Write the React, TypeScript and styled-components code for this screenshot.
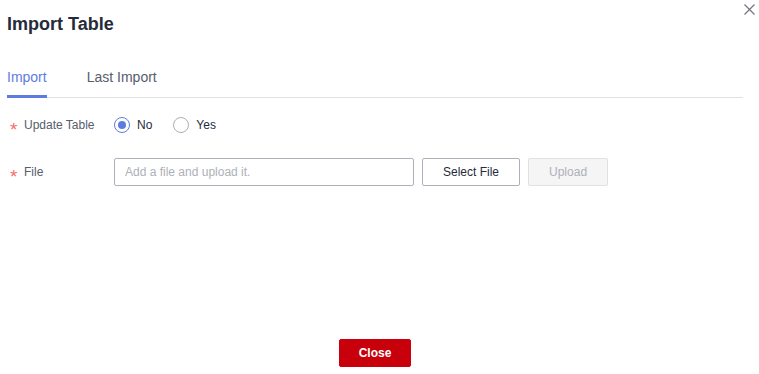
import React, { useState } from 'react';
import styled, { createGlobalStyle } from 'styled-components';

const GlobalStyle = createGlobalStyle`
  html, body {
    margin: 0;
    padding: 0;
    background: #fff;
  }
  body {
    font-family: 'Liberation Sans', Arial, sans-serif;
    color: #252b3a;
  }
`;

const Dialog = styled.div`
  position: relative;
  box-sizing: border-box;
  height: 100vh;
  padding: 12px 16px 7px 7px;
  display: flex;
  flex-direction: column;
`;

const Title = styled.h2`
  margin: 0;
  font-size: 18px;
  line-height: 24px;
  font-weight: 700;
  color: #252b3a;
`;

const CloseIcon = styled.button`
  position: absolute;
  top: 3px;
  right: 4px;
  width: 12px;
  height: 12px;
  padding: 0;
  border: 0;
  background: none;
  display: flex;
  align-items: center;
  justify-content: center;
  cursor: pointer;
`;

const TabList = styled.div`
  margin-top: 31px;
  display: flex;
  gap: 40px;
  border-bottom: 1px solid #dfe1e6;
`;

const Tab = styled.div<{ active?: boolean }>`
  font-size: 14px;
  line-height: 20px;
  padding-bottom: 8px;
  border-bottom: 3px solid ${({ active }) => (active ? '#5e7ce0' : 'transparent')};
  margin-bottom: -1px;
  color: ${({ active }) => (active ? '#5e7ce0' : '#575d6c')};
  cursor: pointer;
`;

const Body = styled.div`
  flex: 1;
  display: flex;
  flex-direction: column;
  gap: 19px;
  padding-top: 13px;
`;

const Row = styled.div`
  display: flex;
  align-items: center;
  height: 28px;
`;

const Label = styled.div`
  width: 107px;
  flex-shrink: 0;
  display: flex;
  align-items: center;
  font-size: 12px;
  color: #575d6c;
`;

const Required = styled.span`
  color: #f66f6a;
  font-size: 19px;
  line-height: 12px;
  width: 17px;
  padding-left: 3px;
  box-sizing: border-box;
  transform: translateY(5px);
`;

const RadioGroup = styled.div`
  display: flex;
  align-items: center;
  gap: 21px;
`;

const RadioItem = styled.label`
  display: flex;
  align-items: center;
  gap: 7px;
  font-size: 12px;
  color: #252b3a;
  cursor: pointer;
`;

const RadioCircle = styled.span<{ checked?: boolean }>`
  box-sizing: border-box;
  width: 16px;
  height: 16px;
  border-radius: 50%;
  border: 1px solid ${({ checked }) => (checked ? '#5e7ce0' : '#adb0b8')};
  display: flex;
  align-items: center;
  justify-content: center;

  &::after {
    content: '';
    width: 8px;
    height: 8px;
    border-radius: 50%;
    background: #5e7ce0;
    display: ${({ checked }) => (checked ? 'block' : 'none')};
  }
`;

const FileInput = styled.input`
  box-sizing: border-box;
  width: 300px;
  height: 28px;
  border: 1px solid #adb0b8;
  border-radius: 2px;
  padding: 0 10px;
  font-family: inherit;
  font-size: 12px;
  color: #252b3a;
  outline: none;

  &::placeholder {
    color: #adb0b8;
  }
`;

const Button = styled.button<{ variant?: 'common' | 'disabled' | 'danger'; bold?: boolean }>`
  box-sizing: border-box;
  height: 28px;
  min-width: ${({ variant }) => (variant === 'disabled' ? 80 : 72)}px;
  padding: 0 ${({ variant }) => (variant === 'danger' ? 18 : 20)}px;
  border-radius: 2px;
  font-family: inherit;
  font-size: 12px;
  font-weight: ${({ bold }) => (bold ? 700 : 400)};
  cursor: pointer;
  border: 1px solid
    ${({ variant }) =>
      variant === 'danger' ? '#c7000b' : variant === 'disabled' ? '#dfe1e6' : '#adb0b8'};
  background: ${({ variant }) =>
    variant === 'danger' ? '#c7000b' : variant === 'disabled' ? '#f5f5f6' : '#fff'};
  color: ${({ variant }) =>
    variant === 'danger' ? '#fff' : variant === 'disabled' ? '#adb0b8' : '#252b3a'};
`;

const Controls = styled.div`
  display: flex;
  align-items: center;
  gap: 8px;
`;

const Footer = styled.div`
  display: flex;
  justify-content: center;
`;

export default function App() {
  const [update, setUpdate] = useState(false);
  const [tab, setTab] = useState(0);

  return (
    <>
      <GlobalStyle />
      <Dialog>
        <Title>Import Table</Title>
        <CloseIcon aria-label="close">
          <svg width="11" height="11" viewBox="0 0 11 11">
            <path d="M0.5 0.5L10.5 10.5M10.5 0.5L0.5 10.5" stroke="#71757f" strokeWidth="1.2" />
          </svg>
        </CloseIcon>
        <TabList>
          <Tab active={tab === 0} onClick={() => setTab(0)}>Import</Tab>
          <Tab active={tab === 1} onClick={() => setTab(1)}>Last Import</Tab>
        </TabList>
        <Body>
          <Row>
            <Label>
              <Required>*</Required>Update Table
            </Label>
            <RadioGroup>
              <RadioItem onClick={() => setUpdate(false)}>
                <RadioCircle checked={!update} />
                No
              </RadioItem>
              <RadioItem onClick={() => setUpdate(true)}>
                <RadioCircle checked={update} />
                Yes
              </RadioItem>
            </RadioGroup>
          </Row>
          <Row>
            <Label>
              <Required>*</Required>File
            </Label>
            <Controls>
              <FileInput placeholder="Add a file and upload it." readOnly />
              <Button>Select File</Button>
              <Button variant="disabled" disabled>
                Upload
              </Button>
            </Controls>
          </Row>
        </Body>
        <Footer>
          <Button variant="danger" bold>
            Close
          </Button>
        </Footer>
      </Dialog>
    </>
  );
}
